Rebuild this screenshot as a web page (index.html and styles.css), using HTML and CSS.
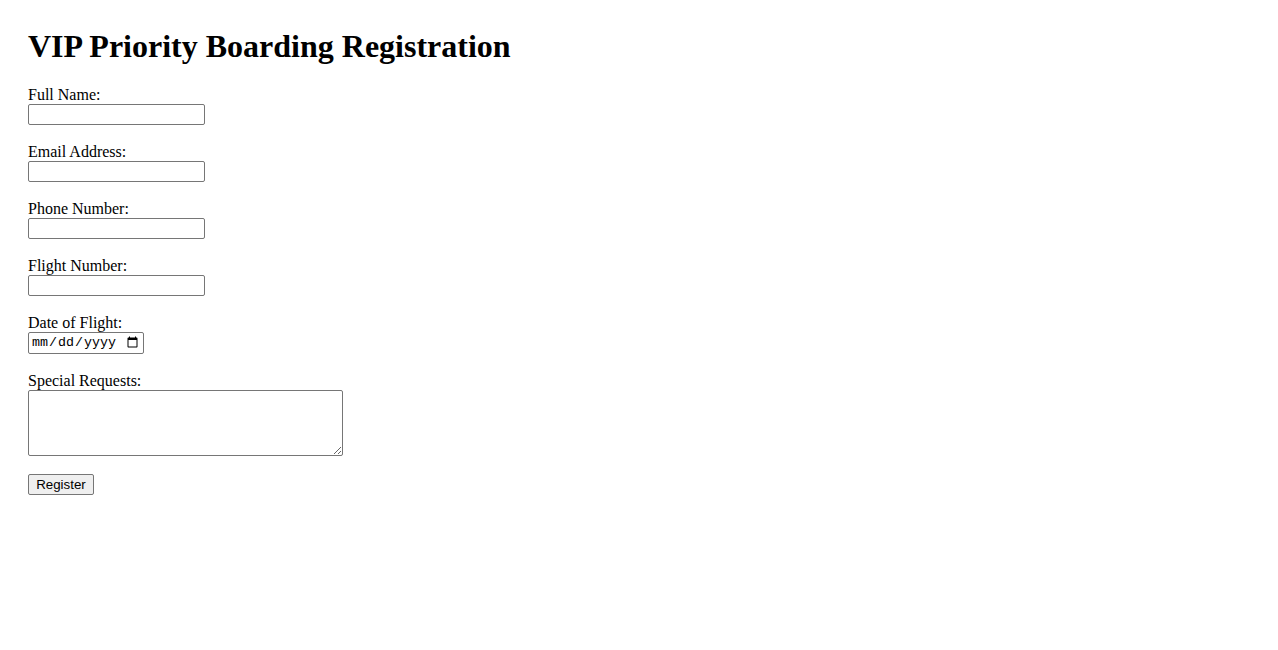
FILE: index.html
```html
<!DOCTYPE html>
<html>
<head>
<meta charset="utf-8">
<title>VIP Priority Boarding Registration</title>
<link rel="stylesheet" href="styles.css">
</head>
<body>
<div class="page">
  <h1 class="title">VIP Priority Boarding Registration</h1>
  <form class="form">
    <div class="field">
      <label class="label" for="name">Full Name:</label>
      <input class="input" type="text" id="name">
    </div>
    <div class="field">
      <label class="label" for="email">Email Address:</label>
      <input class="input" type="email" id="email">
    </div>
    <div class="field">
      <label class="label" for="phone">Phone Number:</label>
      <input class="input" type="tel" id="phone">
    </div>
    <div class="field">
      <label class="label" for="flight">Flight Number:</label>
      <input class="input" type="text" id="flight">
    </div>
    <div class="field">
      <label class="label" for="date">Date of Flight:</label>
      <input class="date" type="date" id="date">
    </div>
    <div class="field">
      <label class="label" for="req">Special Requests:</label>
      <textarea class="textarea" id="req"></textarea>
    </div>
    <button class="button" type="button">Register</button>
  </form>
</div>
</body>
</html>
```

FILE: styles.css
```css
body {
  margin: 8px;
  font-family: "Liberation Serif", "Times New Roman", serif;
  font-size: 16px;
  color: #000;
  background: #fff;
}
.page {
  padding: 20px;
}
.title {
  margin: 0 0 21px 0;
  font-size: 32px;
  font-weight: bold;
}
.field {
  margin-bottom: 18px;
}
.label {
  display: block;
}
.input {
  box-sizing: border-box;
  width: 177px;
  height: 21px;
  margin: 0;
  border: 1px solid #767676;
  border-radius: 2px;
  padding: 1px 2px;
  font-family: "Liberation Sans", Arial, sans-serif;
  font-size: 13.33px;
}
.date {
  box-sizing: border-box;
  width: 116px;
  height: 22px;
  margin: 0;
  border: 1px solid #767676;
  border-radius: 2px;
  padding: 1px 2px;
  font-family: "Liberation Mono", monospace;
  font-size: 13.33px;
}
.textarea {
  box-sizing: border-box;
  display: block;
  width: 315px;
  height: 66px;
  margin: 0;
  border: 1px solid #767676;
  border-radius: 2px;
  padding: 2px;
  font-family: "Liberation Mono", monospace;
  font-size: 13.33px;
}
.button {
  box-sizing: border-box;
  width: 66px;
  height: 21px;
  margin: 0;
  padding: 1px 6px;
  border: 1px solid #767676;
  border-radius: 2px;
  background: #efefef;
  font-family: "Liberation Sans", Arial, sans-serif;
  font-size: 13.33px;
  color: #000;
}
```
